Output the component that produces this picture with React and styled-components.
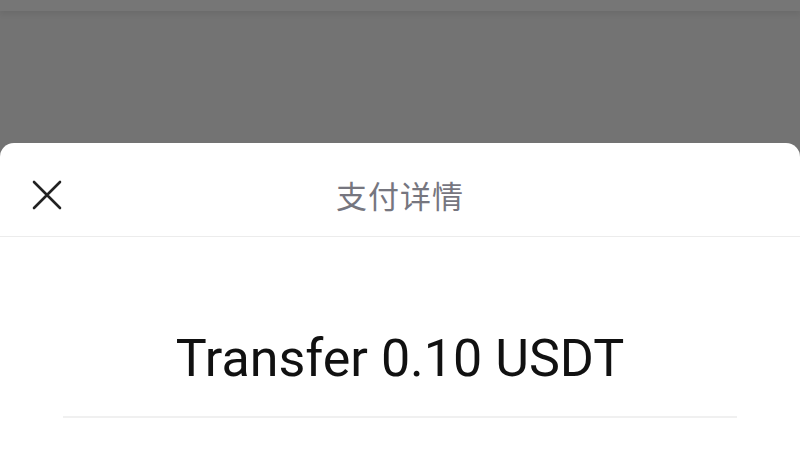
import styled, { createGlobalStyle } from 'styled-components';

const GlobalStyle = createGlobalStyle`
  html, body {
    margin: 0;
    padding: 0;
    height: 100%;
    overflow: hidden;
  }
  body {
    font-family: Roboto, "Noto Sans CJK SC", sans-serif;
    background: #737373;
  }
  #root {
    height: 100%;
  }
`;

export default function App() {
  return (
    <>
      <GlobalStyle />
      <Page>
        <TopBar />
        <Backdrop />
        <Sheet>
          <Header>
            <CloseButton aria-label="close">
              <svg width="32" height="32" viewBox="0 0 32 32" fill="none">
                <path d="M3 3L29 29M29 3L3 29" stroke="#222" strokeWidth="2.6" strokeLinecap="round" />
              </svg>
            </CloseButton>
            <Title>支付详情</Title>
          </Header>
          <Body>
            <Amount>Transfer 0.10 USDT</Amount>
            <Divider />
            <Row>
              <Label>收款地址</Label>
              <Value>f</Value>
            </Row>
          </Body>
        </Sheet>
      </Page>
    </>
  );
}

const Page = styled.div`
  height: 100%;
  display: flex;
  flex-direction: column;
`;

const TopBar = styled.div`
  height: 11px;
  background: #767676;
  box-shadow: 0 3px 6px rgba(0, 0, 0, 0.08);
  flex-shrink: 0;
`;

const Backdrop = styled.div`
  height: 132px;
  flex-shrink: 0;
`;

const Sheet = styled.section`
  flex: 1;
  background: #fff;
  border-radius: 14px 14px 0 0;
  display: flex;
  flex-direction: column;
  overflow: hidden;
`;

const Header = styled.header`
  height: 93px;
  border-bottom: 1px solid #ececec;
  display: flex;
  align-items: center;
  justify-content: center;
  position: relative;
  flex-shrink: 0;
`;

const CloseButton = styled.button`
  position: absolute;
  left: 31px;
  top: 50%;
  transform: translateY(-50%);
  margin-top: 5px;
  width: 32px;
  height: 32px;
  padding: 0;
  border: none;
  background: none;
  display: flex;
`;

const Title = styled.h1`
  margin: 0;
  font-family: "Noto Sans CJK SC", sans-serif;
  font-weight: 400;
  font-size: 31px;
  color: #76767f;
  letter-spacing: 1px;
  margin-top: 10px;
`;

const Body = styled.div`
  padding: 0 63px;
  display: flex;
  flex-direction: column;
`;

const Amount = styled.div`
  text-align: center;
  font-family: Roboto, sans-serif;
  font-size: 52px;
  color: #111;
  line-height: 60px;
  padding: 92px 0 27px;
`;

const Divider = styled.div`
  height: 2px;
  background: #f0f0f0;
`;

const Row = styled.div`
  display: flex;
  align-items: flex-start;
  padding-top: 28px;
  gap: 40px;
`;

const Label = styled.span`
  font-family: "Noto Sans CJK SC", sans-serif;
  font-size: 28px;
  color: #8a8a92;
  width: 280px;
  padding-left: 6px;
`;

const Value = styled.span`
  font-family: Roboto, sans-serif;
  font-size: 28px;
  color: #111;
`;
